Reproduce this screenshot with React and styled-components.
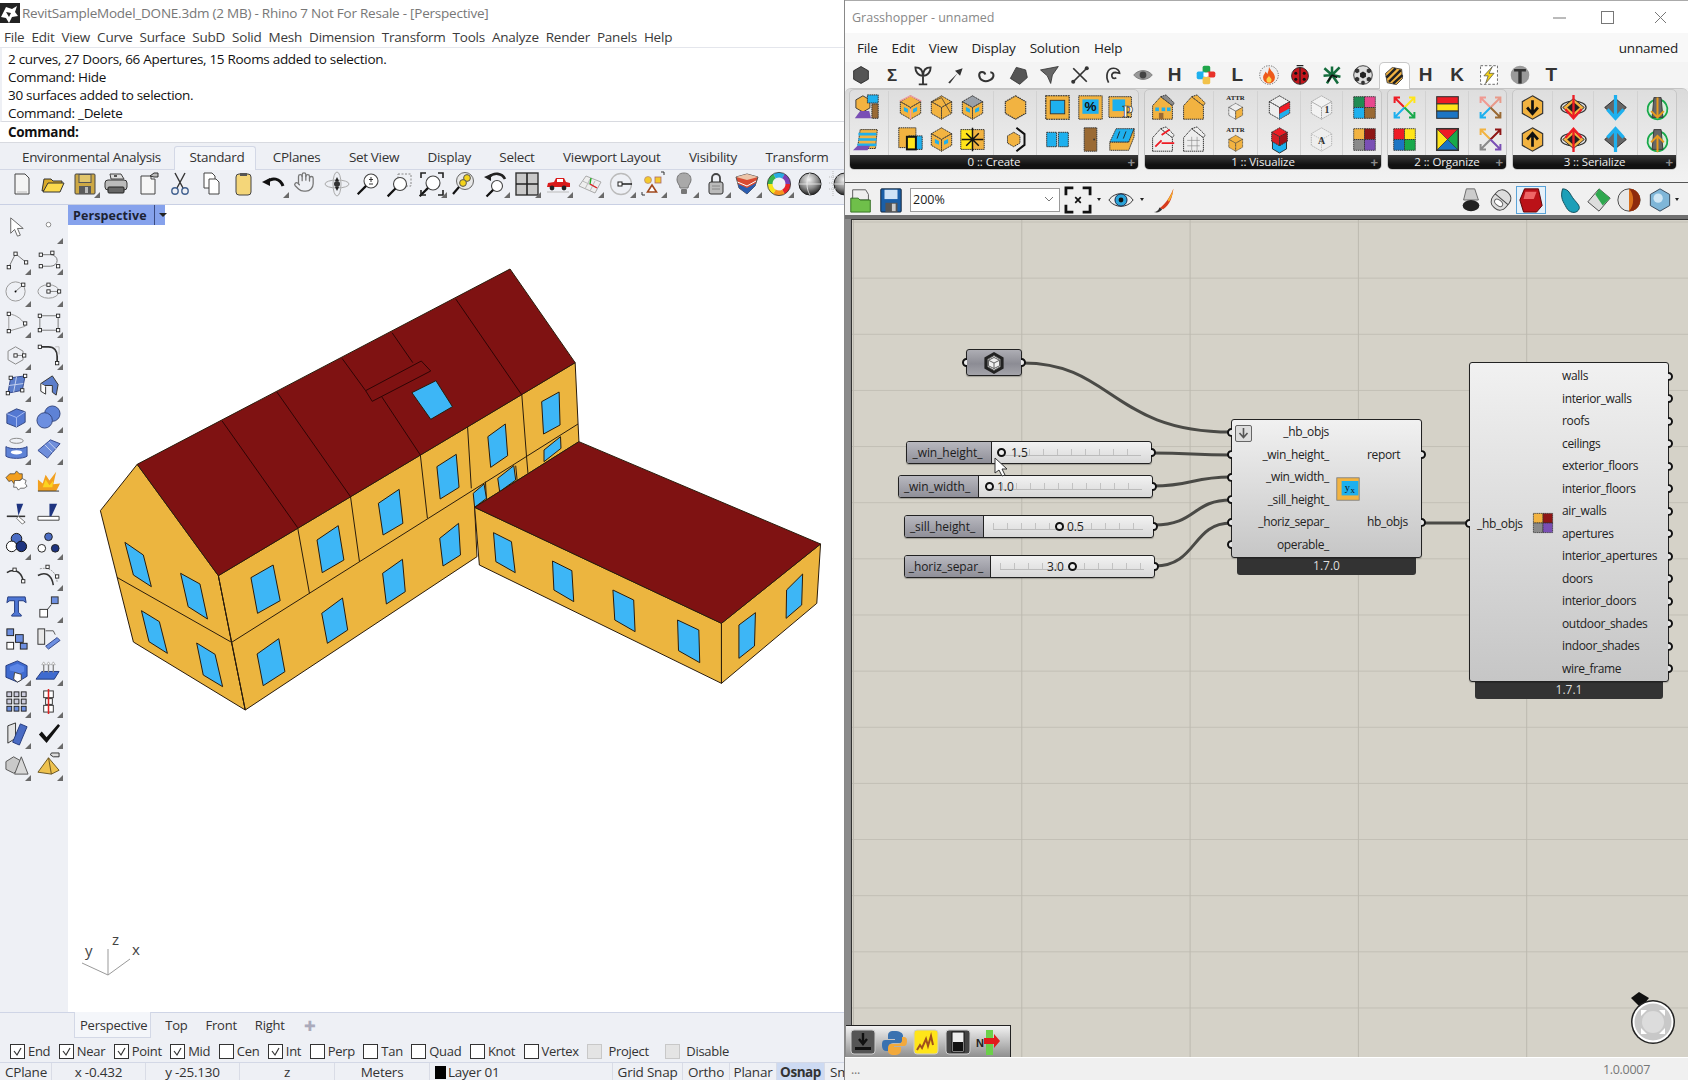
import React from 'react';
import styled, { createGlobalStyle } from 'styled-components';
import { Hand } from 'lucide-react';

const UI = '"Open Sans", "Noto Sans", sans-serif';
const O = '#f2b341', B = '#1eb0ee', M = '#8e1616', P = '#7a4fb5', G = '#8a8a8a', BR = '#9a6a34', RD = '#ee1c25', YL = '#ffe51a', GN = '#18a94b', BL = '#1b75c4';

const Global = createGlobalStyle`
  html, body { margin: 0; padding: 0; background: #fff; }
  body { font-family: ${UI}; font-size: 12px; color: #1c1c1c; }
`;

const Page = styled.div`display: flex; width: 1688px; height: 1080px; overflow: hidden;`;
const RhinoWindow = styled.div`display: flex; flex-direction: column; width: 845px; height: 1080px; background: #eef0f5; flex: none;`;
const RhinoTitle = styled.div`display: flex; align-items: center; height: 26px; background: #fff; color: #777; font-size: 13.5px; letter-spacing: -.23px; gap: 2px; flex: none;`;
const RhinoMenu = styled.div`display: flex; align-items: center; height: 21px; padding-left: 4px; gap: 7px; background: #fff; font-size: 13.5px; letter-spacing: -.23px; color: #3a3a3a; border-bottom: 1px solid #e4e6ec; flex: none;`;
const History = styled.div`height: 74px; background: #fff; padding: 2px 0 0 6px; border-left: 2px solid #eef0f5; flex: none; border-bottom: 1px solid #d8dae0; box-sizing: border-box;`;
const HistoryLine = styled.div`height: 18px; line-height: 18px; font-size: 13.5px; letter-spacing: -.3px; color: #111;`;
const CommandRow = styled.div`height: 20px; line-height: 20px; background: #fff; padding-left: 8px; font-size: 13.5px; font-weight: 700; letter-spacing: -.3px; color: #111; flex: none; border-bottom: 1px solid #d8dae0;`;
const TabRow = styled.div`display: flex; align-items: flex-end; height: 26px; padding-left: 22px; gap: 28.5px; border-bottom: 1px solid #d3d8e6; flex: none; font-size: 13.5px; letter-spacing: -.33px;`;
const RhinoTab = styled.div`height: 23px; line-height: 23px; color: #333; position: relative; white-space: nowrap;
  ${p => p.$on && `&::before { content: ''; position: absolute; left: -15px; right: -12px; top: 0; bottom: -1px; background: #f3f5f9; border: 1px solid #d3d8e6; border-bottom: 0; border-radius: 3px 3px 0 0; z-index: 0; }`}
  & > span { position: relative; }`;
const Toolbar = styled.div`display: flex; align-items: flex-start; height: 35px; padding: 0 0 6px 6px; flex: none; border-bottom: 1px solid #c9d0e4; overflow: hidden; box-sizing: border-box;`;
const ToolSlot = styled.div`position: relative; width: 31.55px; height: 28px; display: flex; align-items: center; justify-content: center; flex: none;
  ${p => p.$more && `&::after { content: ''; position: absolute; right: 1px; bottom: 0; border-left: 6px solid transparent; border-bottom: 6px solid #6a6a6a; }`}`;
const Work = styled.div`display: flex; flex: 1; min-height: 0;`;
const Sidebar = styled.div`width: 68px; flex: none; display: grid; grid-template-columns: 32px 32px; grid-auto-rows: 31.6px; align-content: start; padding-top: 7px; box-sizing: border-box;`;
const SideSlot = styled(ToolSlot)`width: 32px; height: 31.6px;`;
const Viewport = styled.div`position: relative; flex: 1; background: #fff;`;
const ViewName = styled.div`display: flex; align-items: center; height: 20px; width: 97px; background: #86a2ec; box-sizing: border-box; padding-left: 5px; font-weight: 700; font-size: 12.5px; color: #1c2233; letter-spacing: .1px;`;
const ViewArrow = styled.span`margin-left: 7px; height: 20px; border-left: 1px solid #3a4a80; padding-left: 4px; display: flex; align-items: center;
  &::after { content: ''; border-left: 4px solid transparent; border-right: 4px solid transparent; border-top: 4px solid #222; }`;
const BuildingSvg = styled.svg`position: absolute; left: 22px; top: 55px; width: 740px; height: 460px;`;
const AxisSvg = styled.svg`position: absolute; left: 5px; top: 726px; width: 80px; height: 50px; overflow: visible;`;
const ViewTabs = styled.div`display: flex; align-items: center; height: 28px; padding: 0 0 3px 80px; gap: 18px; font-size: 13px; letter-spacing: -.23px; color: #333; flex: none; border-top: 1px solid #cfd5e6; box-sizing: border-box;`;
const ViewTab = styled.div`position: relative; & > span { position: relative; }
  ${p => p.$on && `&::before { content: ''; position: absolute; left: -6px; right: -4px; top: -4px; bottom: -4px; background: #f4f6fa; border: 1px solid #d3d8e6; border-top: 0; }`}`;
const PlusTab = styled.span`color: #aab; font-size: 14px; margin-left: 1px;`;
const OsnapRow = styled.div`display: flex; align-items: center; height: 23px; padding-left: 10px; gap: 8.5px; font-size: 13px; letter-spacing: -.3px; color: #333; flex: none; box-sizing: border-box; border-bottom: 1px solid #d3d8e6;`;
const Snap = styled.label`display: flex; align-items: center; gap: 3px; margin-right: ${p => p.$mr || 0}px; color: #333;`;
const Check = styled.span`width: 13px; height: 13px; border: 1px solid ${p => p.$off ? '#c8c8c8' : '#333'}; background: ${p => p.$off ? '#e4e4e4' : '#fff'}; display: flex; align-items: center; justify-content: center; flex: none;`;
const StatusRow = styled.div`display: flex; height: 17px; font-size: 13.5px; line-height: 15px; letter-spacing: -.23px; color: #333; flex: none; overflow: hidden;`;
const Cell = styled.div`width: ${p => p.$w}px; height: 17px; padding-top: 2px; flex: none; display: flex; align-items: center; gap: 2px; justify-content: ${p => p.$left ? 'flex-start' : 'center'}; padding-left: ${p => p.$left ? 5 : 0}px; box-sizing: border-box; border-right: 1px solid #d9dce6; white-space: nowrap;
  ${p => p.$on && `background: #cddaf2; font-weight: 700; letter-spacing: -.45px;`}`;
const LayerSwatch = styled.span`width: 11px; height: 13px; background: #000; display: inline-block;`;

const GhWindow = styled.div`display: flex; flex-direction: column; flex: 1; height: 1080px; background: #f0f0f0; border-top: 1px solid #aaa; box-sizing: border-box; box-shadow: -1px 0 0 #888; position: relative; z-index: 2;`;
const GhTitle = styled.div`display: flex; align-items: center; justify-content: space-between; height: 32px; background: #fff; padding-left: 7px; color: #888; font-size: 12.5px; flex: none;`;
const WinButtons = styled.div`display: flex; margin-right: -1px;`;
const WinButton = styled.div`width: ${p => p.$w}px; height: 24px; display: flex; align-items: center; justify-content: center;`;
const GhMenu = styled.div`display: flex; align-items: center; justify-content: space-between; height: 29px; padding: 1px 10px 0 12px; background: #f8f8f8; font-size: 13.5px; letter-spacing: -.2px; color: #222; flex: none; box-sizing: border-box;`;
const GhMenuItems = styled.div`display: flex; gap: 14px;`;
const GhTabs = styled.div`display: flex; align-items: center; height: 26px; padding-left: 0px; flex: none; background: #f4f4f4;`;
const GhTab = styled.div`width: 31.4px; height: 26px; display: flex; align-items: center; justify-content: center; flex: none; font: 700 19px "Liberation Sans", sans-serif; color: #333; box-sizing: border-box;
  ${p => p.$on && `background: #fff; border: 1px solid #c8c8c8; border-bottom: 0; border-radius: 5px 5px 0 0; height: 27px; margin-bottom: -1px; position: relative; z-index: 1;`}`;
const Ribbon = styled.div`display: flex; gap: 5px; height: 95px; padding: 0 0 0 4px; flex: none; background: linear-gradient(#dadada, #efefef 82%, #f2f2f2); border-top: 1px solid #c4c4c4; box-sizing: border-box; border-radius: 6px 6px 0 0;`;
const Group = styled.div`width: ${p => p.$w}px; height: 81px; display: flex; flex-direction: column; flex: none; border-radius: 5px; border: 1px solid #c6c6c6; box-sizing: border-box; background: linear-gradient(#dedede, #f0f0f0); overflow: hidden;`;
const GroupIcons = styled.div`display: flex; height: 65px; padding-top: 1px; box-sizing: border-box; flex: none;`;
const GroupCol = styled.div`width: ${p => p.$w}px; flex: none; display: flex; flex-direction: column; align-items: center; justify-content: space-around; padding: 0 ${p => p.$pr || 0}px 0 ${p => p.$pl || 0}px; box-sizing: border-box; ${p => p.$sep ? 'border-left: 1px solid #d2d2d2;' : ''}`;
const GroupFoot = styled.div`position: relative; flex: 1; background: linear-gradient(#3a3a3a, #111 70%); color: #eee; font: 11.5px/13px ${UI}; text-align: center; letter-spacing: -.1px;`;
const GroupPlus = styled.span`position: absolute; right: 3px; top: 0; color: #8a8a8a; font: 700 13px/15px "Liberation Sans", sans-serif;`;
const GhBar = styled.div`display: flex; align-items: center; height: 33px; padding: 1px 0 0 1px; border-top: 1px solid #555; background: #f0f0f0; flex: none; box-sizing: border-box; margin-top: -1px;`;
const BarIcon = styled.div`width: ${p => p.$w || 30}px; height: 28px; display: flex; align-items: center; justify-content: center; flex: none; box-sizing: border-box; ${p => p.$sel && 'border: 1px solid #5aa3d8; background: #e6f1fa;'}`;
const ZoomBox = styled.div`width: 150px; height: 24px; margin: 0 4px 0 4px; border: 1px solid #999; background: #fff; display: flex; align-items: center; justify-content: space-between; padding: 0 6px 0 2px; box-sizing: border-box; font-size: 12.5px; flex: none;`;
const Caret = styled.span`width: 0; height: 0; margin: 0 ${p => p.$m ?? 0}px; border-left: 2.5px solid transparent; border-right: 2.5px solid transparent; border-top: 3px solid #222; flex: none;`;
const BarSpacer = styled.div`flex: 1;`;
const CanvasWrap = styled.div`display: flex; flex: 1; min-height: 0; flex-direction: column; border-top: 4px solid #6f6f6f; position: relative; background: #8b8b8b; padding-left: 6px;`;
const Canvas = styled.div`position: relative; flex: 1; border-left: 1px solid #333; border-top: 1px solid #333;
  background-color: #d5d2c8;
  background-image:
    linear-gradient(to right, #bcb9af 1px, transparent 1px),
    linear-gradient(to bottom, #c2bfb5 1px, transparent 1px);
  background-size: 168.3px 100%, 100% 56.15px;
  background-position: 1px 0, 0 1.5px;`;
const WireSvg = styled.svg`position: absolute; left: 0; top: 0; width: 837px; height: 836px; overflow: visible;`;
const ParamNode = styled.div`position: absolute; left: ${p => p.$x}px; top: ${p => p.$y}px; width: 56px; height: 27px; border: 1px solid #222; border-radius: 3px; box-sizing: border-box; background: linear-gradient(#aeaeb4, #8c8c94 55%, #a4a4aa); display: flex; align-items: center; justify-content: center; box-shadow: 0 1px 1px rgba(0,0,0,.25);`;
const SliderNode = styled.div`position: absolute; left: ${p => p.$x}px; top: ${p => p.$y}px; width: ${p => p.$w}px; height: 23px; display: flex; border: 1px solid #222; border-radius: 3px; box-sizing: border-box; background: linear-gradient(#f2f2f2, #d8d8d8); box-shadow: 0 1px 1px rgba(0,0,0,.25);`;
const SliderLabel = styled.div`width: ${p => p.$w}px; flex: none; padding-right: 3px; box-sizing: border-box; background: linear-gradient(#b8b8bf, #8f8f98); border-right: 1px solid #222; display: flex; align-items: center; justify-content: center; font-size: 12px; color: #1c1c1c; border-radius: 2px 0 0 2px; letter-spacing: -.05px;`;
const SliderTrack = styled.div`position: relative; flex: 1;`;
const Ticks = styled.div`position: absolute; left: 9px; right: 10px; top: 7px; height: 6px; border-bottom: 1px solid #bbb; background-image: repeating-linear-gradient(to right, #c2c2c2 0 1px, transparent 1px 14px);`;
const Knob = styled.div`position: absolute; left: ${p => p.$x}px; top: 6px; width: 5px; height: 5px; border: 2px solid #111; border-radius: 50%; background: #eee; box-sizing: content-box;`;
const SliderValue = styled.div`position: absolute; left: ${p => p.$x}px; top: 0; line-height: 21px; font-size: 12px; color: #222;`;
const Port = styled.span`position: absolute; top: 50%; ${p => p.$side}: -5px; width: 9px; height: 9px; margin-top: -4.5px; border-radius: 50%; border: 2px solid #111; background: #ececec; box-sizing: border-box; z-index: 2; clip-path: ${p => p.$side === 'left' ? 'inset(0 45% 0 0)' : 'inset(0 0 0 45%)'};`;
const CompNode = styled.div`position: absolute; left: ${p => p.$x}px; top: ${p => p.$y}px; width: ${p => p.$w}px; display: flex; flex-direction: column;`;
const CompBody = styled.div`position: relative; display: flex; height: ${p => p.$h}px; box-sizing: border-box; border: 1px solid #222; border-radius: 3px; background: linear-gradient(#f1f1f1, #c6c6c6); padding-top: ${p => p.$pt || 0}px; box-shadow: 0 1px 1px rgba(0,0,0,.2);`;
const CompFoot = styled.div`height: 17px; margin: 0 6px; background: #333; color: #ddd; border-radius: 0 0 3px 3px; text-align: center; font-size: 12px; line-height: 16px;`;
const PortRows = styled.div`width: ${p => p.$w}px; flex: none; display: flex; flex-direction: column;`;
const PortRow = styled.div`height: 22.5px; line-height: 22px; font-size: 12px; color: #222; white-space: nowrap; text-align: ${p => p.$right ? 'right' : 'left'}; letter-spacing: -.35px;`;
const CompIcon = styled.div`width: ${p => p.$w}px; flex: none; display: flex; align-items: center; justify-content: center;`;
const InPorts = styled.div`position: absolute; left: 0; top: ${p => p.$t}px; display: flex; flex-direction: column;`;
const PortAnchor = styled.div`position: relative; height: 22.5px; width: 1px;`;
const OutPorts = styled.div`position: absolute; right: 0; top: ${p => p.$t}px; display: flex; flex-direction: column;`;
const Collapse = styled.div`position: absolute; left: 3px; top: 5px; width: 15px; height: 15px; border: 1px solid #666; border-radius: 2px; background: #ddd; display: flex; align-items: center; justify-content: center;`;
const SideLabel = styled.div`width: 92px; flex: none; display: flex; align-items: center; gap: 8px; padding-left: 7px; box-sizing: border-box; font-size: 12px; letter-spacing: -.35px; color: #222;`;
const CursorSvg = styled.svg`position: absolute; left: 142px; top: 237px; width: 16px; height: 20px; z-index: 3;`;
const Widgets = styled.div`position: absolute; left: -6px; bottom: 0; width: 165px; height: 32px; display: flex; align-items: center; padding-left: 1px; background: linear-gradient(#f2f2f2, #8f8f8f); border: 1px solid #222; border-left: 0; border-bottom: 0; box-sizing: border-box;`;
const WidgetSlot = styled.div`width: 31.6px; height: 28px; display: flex; align-items: center; justify-content: center;`;
const Compass = styled.svg`position: absolute; right: 13px; bottom: 11px; width: 48px; height: 62px;`;
const GhStatus = styled.div`display: flex; align-items: center; justify-content: space-between; height: 22px; padding: 0 38px 0 6px; background: #f0f0f0; border-top: 1px solid #fff; flex: none; color: #777; font-size: 12.5px; letter-spacing: -.3px;`;
const Svg = styled.svg`display: block; flex: none; overflow: visible;`;

const rad = a => a * Math.PI / 180;
const hex = (cx, cy, r) => [0, 60, 120, 180, 240, 300].map(a => `${(cx + r * Math.sin(rad(a))).toFixed(1)},${(cy - r * Math.cos(rad(a))).toFixed(1)}`).join(' ');
const Ic = ({ s = 26, v = 26, children }) => <Svg width={s} height={s} viewBox={`0 0 ${v} ${v}`}>{children}</Svg>;

const Mag = ({ x = 15, y = 10, r = 6, c = '#fff' }) => <g><circle cx={x} cy={y} r={r} fill={c} stroke="#444" strokeWidth="1.1" /><line x1={x - r * .7} y1={y + r * .7} x2={x - r * 1.9} y2={y + r * 1.9} stroke="#111" strokeWidth="2.2" /></g>;
const Pt = ({ x, y }) => <rect x={x - 1.7} y={y - 1.7} width="3.4" height="3.4" fill="#fff" stroke="#222" strokeWidth=".9" />;

const rhinoTools = [
  [<><path d="M6 3h10l4 4v16H6z" fill="#f4f4f4" stroke="#444" /><path d="M8 21h10" stroke="#bbb" /></>],
  [<><path d="M2 20 4 8h7l2 2h9v3z" fill="#d9a928" stroke="#333" /><path d="M3 21 8 12h16l-4 9z" fill="#fbd94d" stroke="#333" /></>],
  [<><rect x="3" y="3" width="20" height="20" rx="1" fill="#cda845" stroke="#444" /><rect x="7" y="3.5" width="12" height="8" fill="#e2c66c" stroke="#555" /><rect x="7" y="15" width="12" height="8" fill="#5a5a5a" /><rect x="13" y="16" width="3" height="6" fill="#bbb" /></>, 1],
  [<><path d="M7 3h11l3 5H8z" fill="#ddd" stroke="#444" /><rect x="2" y="9" width="22" height="10" rx="3" fill="#bbb" stroke="#333" /><rect x="5" y="16" width="16" height="6" rx="1" fill="#666" stroke="#222" /><path d="M11 5h3" stroke="#555" strokeWidth="2" /></>],
  [<><path d="M6 5h10v3l4 0v15H6z" fill="#f6f6f6" stroke="#444" /><path d="M15 5l4-3h4v4h-4z" fill="#bbb" stroke="#333" /></>],
  [<><path d="M8 2l8 15M18 2 10 17" stroke="#333" strokeWidth="1.4" /><circle cx="8" cy="20" r="3.2" fill="none" stroke="#41608f" strokeWidth="1.4" /><circle cx="18" cy="20" r="3.2" fill="none" stroke="#41608f" strokeWidth="1.4" /></>],
  [<><path d="M6 2h8l3 3v12H6z" fill="#fff" stroke="#444" /><path d="M11 8h7l3 3v12H11z" fill="#fff" stroke="#444" /></>],
  [<><rect x="6" y="3" width="15" height="21" rx="3" fill="#f4d679" stroke="#444" /><rect x="10" y="2" width="7" height="3" fill="#555" /></>],
  [<><path d="M22 15C19 7 11 6 6 11" fill="none" stroke="#111" strokeWidth="3" /><path d="M1 11l8-4 0 8z" fill="#111" /></>, 1],
  [<Hand size={22} color="#777" strokeWidth={1.4} />],
  [<><circle cx="13" cy="13" r="3" fill="#333" /><ellipse cx="13" cy="13" rx="12" ry="4" fill="none" stroke="#aaa" /><ellipse cx="13" cy="13" rx="4" ry="12" fill="none" stroke="#aaa" /><path d="M13 6l-2 4h4zM13 20l-2-4h4z" fill="#222" /></>],
  [<><Mag x={15} y={10} r={7} /><path d="M15 6v5M13 8.5h4M13 13h4" stroke="#333" strokeWidth="1" /></>],
  [<><rect x="11" y="3" width="13" height="12" fill="none" stroke="#888" strokeDasharray="2 1.5" /><Mag x={13} y={13} r={6.5} /></>],
  [<><Mag x={14} y={12} r={7} /><path d="M2 7V2h5M19 2h5v5M2 19v5h5M24 19v5h-5" fill="none" stroke="#222" strokeWidth="1.6" /></>, 1],
  [<><circle cx="15" cy="10" r="8.5" fill="#e8e8e8" stroke="#666" /><circle cx="17" cy="7" r="3.4" fill="#f4d319" stroke="#555" /><circle cx="13" cy="12" r="3.4" fill="#f4d319" stroke="#555" /><line x1="9" y1="16" x2="3" y2="23" stroke="#111" strokeWidth="2.2" /></>],
  [<><Mag x={15} y={15} r={5.5} /><path d="M23 8C20 2 12 1 7 6" fill="none" stroke="#222" strokeWidth="2.6" /><path d="M2 6l7-3 0 7z" fill="#222" /></>, 1],
  [<><rect x="2" y="2" width="22" height="22" fill="#c9c9c9" stroke="#333" strokeWidth="1.4" /><path d="M13 2v22M2 13h22" stroke="#222" strokeWidth="1.6" /></>, 1],
  [<><path d="M2 16l1-4 6-1 2-4h8l2 4 4 1v4z" fill="#d81b1b" /><circle cx="7" cy="17" r="2.4" fill="#222" /><circle cx="19" cy="17" r="2.4" fill="#222" /><path d="M2 21h22" stroke="#bbb" /><rect x="12" y="8" width="6" height="3" fill="#fff" /></>, 1],
  [<><path d="M9 5l15 6-6 11L2 15z" fill="#eee" stroke="#aaa" /><path d="M5.5 10l15 7M13 8 8 18M18 10l-5 10" stroke="#bbb" /><path d="M13 13l7 4" stroke="#d22" strokeWidth="1.4" /><path d="M13 13l1-6" stroke="#2a2" strokeWidth="1.4" /></>, 1],
  [<><circle cx="13" cy="13" r="10.5" fill="none" stroke="#bbb" strokeWidth="1.3" /><rect x="10" y="11" width="4" height="4" fill="#fff" stroke="#222" /><line x1="14" y1="13" x2="24" y2="13" stroke="#111" strokeWidth="1.4" /></>, 1],
  [<><circle cx="8" cy="9" r="3.5" fill="#f3c92d" stroke="#a77" strokeWidth=".6" /><rect x="15" y="6" width="6" height="6" fill="#f3c92d" stroke="#a66" strokeWidth=".8" /><path d="M12 14l4.5 7h-9z" fill="#fff" stroke="#a0481c" strokeWidth="1.6" /><path d="M21 1h3v3M2 21v3h3" fill="none" stroke="#333" /></>, 1],
  [<><path d="M13 2c-5 0-7 3-7 7 0 3 3 5 3 8h8c0-3 3-5 3-8 0-4-2-7-7-7z" fill="#a9a9a9" stroke="#777" /><rect x="10" y="18" width="6" height="5" rx="1" fill="#777" /></>, 1],
  [<><path d="M9 11V7a4 4 0 0 1 8 0v4" fill="none" stroke="#444" strokeWidth="1.8" /><rect x="6" y="11" width="14" height="12" rx="2" fill="#bbb" stroke="#333" /><path d="M9 15h8M9 18h8" stroke="#888" /></>, 1],
  [<><path d="M2 6l11-3 11 3-3 9-8 8-8-6z" fill="#d94b32" stroke="#555" /><path d="M2 6l11 3 11-3-11-3z" fill="#ecc4a8" /><path d="M4 13l9 4 9-5-1 3-8 8-8-6z" fill="#2a5db0" /><path d="M3.5 11l9.5 4 9-5" stroke="#fff" fill="none" /></>, 1],
  [<><circle cx="13" cy="13" r="9" fill="none" stroke="#ddd" strokeWidth="5" />
    {['#e8232a', '#f7941e', '#f7e51a', '#39b54a', '#29abe2', '#7a3fb5'].map((c, i) => <circle key={c} cx="13" cy="13" r="9" fill="none" stroke={c} strokeWidth="5" strokeDasharray="9.43 47.1" transform={`rotate(${i * 60} 13 13)`} />)}
    <circle cx="13" cy="13" r="11.6" fill="none" stroke="#333" strokeWidth=".8" /></>, 1],
  [<><circle cx="13" cy="13" r="11" fill="url(#sph)" stroke="#222" /><path d="M2 13h22M13 2c-4 6-4 16 0 22" fill="none" stroke="#eee" strokeWidth=".8" /></>],
  [<><circle cx="16" cy="13" r="11" fill="url(#sph)" stroke="#222" /><path d="M5 13h22" stroke="#eee" strokeWidth=".8" /><path d="M0 6h10M0 12h6M0 18h8M4 0v26" stroke="#bbb" strokeDasharray="1 1" /></>],
];

const pc = '#5c7ecb';
const sideTools = [
  [<path d="M7 3v16l4-4 3 7 3-1-3-7h6z" fill="#fff" stroke="#666" />],
  [<circle cx="13" cy="10" r="2.4" fill="#fff" stroke="#888" />, 1],
  [<><path d="M5 21 12 7l11 9" fill="none" stroke="#777" /><Pt x={5} y={21} /><Pt x={12} y={7} /><Pt x={23} y={16} /></>, 1],
  [<><path d="M5 8h10a7 6 0 0 1 0 12H5" fill="none" stroke="#777" /><Pt x={5} y={8} /><Pt x={17} y={6} /><Pt x={5} y={20} /><Pt x={23} y={20} /></>, 1],
  [<><circle cx="12" cy="14" r="10" fill="none" stroke="#999" /><line x1="12" y1="14" x2="20" y2="7" stroke="#888" /><circle cx="12" cy="14" r="1" /><Pt x={20} y={7} /></>, 1],
  [<><ellipse cx="13" cy="14" rx="11" ry="7" fill="none" stroke="#999" /><line x1="13" y1="14" x2="24" y2="14" stroke="#888" /><Pt x={13} y={14} /><Pt x={24} y={14} /><Pt x={13} y={7} /></>, 1],
  [<><path d="M5 4c8 1 15 6 17 13L5 22z" fill="none" stroke="#999" /><Pt x={5} y={4} /><Pt x={22} y={14} /><Pt x={5} y={22} /></>, 1],
  [<><rect x="4" y="6" width="19" height="15" fill="none" stroke="#777" /><Pt x={4} y={6} /><Pt x={23} y={6} /><Pt x={4} y={21} /><Pt x={23} y={21} /></>, 1],
  [<><polygon points={hex(12, 14, 9)} fill="none" stroke="#888" /><line x1="12" y1="14" x2="21" y2="14" stroke="#888" /><Pt x={12} y={14} /><Pt x={21} y={14} /></>, 1],
  [<><path d="M4 5h9c6 0 9 4 9 10v8" fill="none" stroke="#333" strokeWidth="1.8" /><path d="M20 5h4v8" fill="none" stroke="#bbb" /><Pt x={4} y={5} /><Pt x={22} y={22} /></>, 1],
  [<><path d="M7 5 22 3 19 18 4 21z" fill={pc} stroke="#34488a" /><path d="M13 4l-3 16M5 13l15-2" stroke="#c6d2ef" /><Pt x={7} y={5} /><Pt x={22} y={3} /><Pt x={19} y={18} /><Pt x={4} y={21} /></>, 1],
  [<><path d="M5 11 17 3l6 9-2 11-4-3 0-7-8 0z" fill={pc} stroke="#333" /><path d="M5 11v8l5 3v-8" fill="#fff" stroke="#333" /></>, 1],
  [<><path d="M3 9l10-5 9 3v11l-9 5-10-4z" fill="#5478d2" stroke="#33467e" /><path d="M3 9l10 4 9-6" fill="none" stroke="#a8bbf0" /><path d="M13 13v10" stroke="#a8bbf0" /></>, 1],
  [<><circle cx="17" cy="9" r="8" fill="#5e82d6" stroke="#33467e" /><circle cx="9" cy="16" r="8" fill="#6d8fe0" stroke="#33467e" /></>, 1],
  [<><ellipse cx="13" cy="5" rx="7" ry="2.6" fill="none" stroke="#888" /><path d="M2 11c4 3 18 3 22 0v10c-4 3-18 3-22 0z" fill="#5e82d6" stroke="#34488a" /><ellipse cx="13" cy="17" rx="6" ry="2.2" fill="#fff" /></>, 1],
  [<><path d="M2 15 15 4l10 4-13 15z" fill="#6f8edb" stroke="#34488a" /><path d="M9 9l8 8M13 6l8 8" stroke="#c6d2ef" /></>, 1],
  [<><path d="M6 6h5l2-3 3 3h3v5l-3 2-3 3h-3l-2-3-3 1-3-4z" fill="#f29f1f" stroke="#333" strokeWidth=".7" /><path d="M11 13h6l2-2 4 2-1 3 2 3-3 2-4 0-2 2-2-3-3 0z" fill="#fff" stroke="#333" strokeWidth=".7" /></>],
  [<><path d="M2 24V12l5 4 3-9 4 6 7-9-3 13 7-1-4 8z" fill="#f2a01f" /><path d="M2 24h22" stroke="#333" /><path d="M7 20 10 12l4 6 4-5-1 7z" fill="#fcd41f" /></>],
  [<><path d="M3 17h19" stroke="#333" strokeWidth="1.6" /><path d="M3 17h10" stroke="#333" /><path d="M13 4h7l-5 12z" fill="#1e3480" /><path d="M15 17l7 6-3 2-6-6z" fill="#fff" stroke="#777" /></>],
  [<><path d="M2 17h22v4H2z" fill="#fff" stroke="#444" /><path d="M14 4h8l-6 13h-2z" fill="#1e3480" /></>],
  [<><circle cx="13" cy="8" r="5.5" fill="#4a6cc4" stroke="#111" /><circle cx="8" cy="16" r="5.5" fill="#fff" stroke="#111" /><circle cx="18" cy="16" r="5.5" fill="#1e3480" stroke="#111" /></>, 1],
  [<><circle cx="13" cy="6" r="4" fill="#4a6cc4" stroke="#222" /><circle cx="6" cy="18" r="4" fill="#fff" stroke="#222" /><circle cx="20" cy="18" r="4" fill="#1e3480" stroke="#222" /></>, 1],
  [<><path d="M3 10c6-4 14-3 17 8" fill="none" stroke="#333" strokeWidth="1.6" /><Pt x={11} y={7} /><Pt x={20} y={19} /></>],
  [<><path d="M2 13c7-4 14-2 16 10" fill="none" stroke="#333" strokeWidth="1.6" /><path d="M4 6c9-2 17 2 18 14" fill="none" stroke="#999" strokeDasharray="2 1" /><Pt x={12} y={4} /><Pt x={22} y={14} /></>, 1],
  [<path d="M4 3h18l1 6-3-2h-5v12l3 3v1H8v-1l3-3V7H6L3 9z" fill="#4e76d4" stroke="#233a7e" />],
  [<><rect x="4" y="16" width="8" height="8" fill="#fff" stroke="#333" /><rect x="16" y="3" width="7" height="7" fill="#6d8fe0" stroke="#333" /><path d="M12 16l4-5" stroke="#333" /></>, 1],
  [<><rect x="3" y="3" width="7" height="7" fill="#6d8fe0" stroke="#222" /><rect x="12" y="9" width="8" height="8" fill="#6d8fe0" stroke="#222" /><rect x="3" y="17" width="7" height="7" fill="#fff" stroke="#222" /><rect x="17" y="18" width="7" height="6" fill="#6d8fe0" stroke="#222" /></>],
  [<><rect x="2" y="3" width="7" height="16" fill="#e8e8e8" stroke="#333" /><path d="M10 21 22 12l3 3-12 9z" fill="#6d8fe0" stroke="#34488a" /><path d="M10 5h8l2 4" fill="none" stroke="#555" /></>],
  [<><path d="M2 8l12-5 10 5v11l-10 6-12-5z" fill="#3f6bd0" stroke="#233a7e" /><path d="M6 9l8-3 7 3v5l-5 2-5-2-5-1z" fill="#5c86e6" /><path d="M11 15l7 2v6l-4 2-4-3z" fill="#fff" stroke="#444" /></>, 1],
  [<><path d="M0 22 6 14h18l-5 8z" fill="#3f6bd0" stroke="#233a7e" /><path d="M8 15V6M13 15V6M18 15V6" stroke="#888" strokeWidth="1.4" /><path d="M6 7l2-3 2 3zM11 7l2-3 2 3zM16 7l2-3 2 3z" fill="#fff" stroke="#777" strokeWidth=".5" /></>, 1],
  [<>{[0, 1, 2].map(r => [0, 1, 2].map(c => <rect key={`${r}${c}`} x={3 + c * 7.5} y={3 + r * 7.5} width="5" height="5" fill={r === 2 ? '#6d8fe0' : '#ccd'} stroke="#222" />))}</>, 1],
  [<><rect x="8" y="2" width="10" height="7" fill="#fff" stroke="#333" /><rect x="10" y="10" width="7" height="6" fill="#fff" stroke="#333" /><rect x="8" y="17" width="10" height="7" fill="#fff" stroke="#333" /><line x1="13" y1="0" x2="13" y2="26" stroke="#d22" strokeWidth="1.6" /></>, 1],
  [<><path d="M4 5l8-3v16l-8 5z" fill="#e4e4e4" stroke="#333" /><path d="M9 22 17 3l7 3-8 19z" fill="#4a6cc4" stroke="#233a7e" /></>, 1],
  [<path d="M3 14l3-3 5 6L23 3l2 2-14 18z" fill="#111" />, 1],
  [<><path d="M2 10l8-5 7 4v9l-7 4-8-4z" fill="#c9c9c9" stroke="#555" /><path d="M18 5l7 18H11z" fill="#d8d8d8" stroke="#555" /></>, 1],
  [<><path d="M2 21 13 6l11 13-8 4z" fill="#eec24f" stroke="#6a5520" /><path d="M13 6l3 17" stroke="#6a5520" /><path d="M16 1h8v4h-6l-3-2z" fill="#ddd" stroke="#333" /></>, 1],
];

const gh = {
  hexD: <polygon points={hex(13, 13, 10)} fill="#555" stroke="#222" />,
  sigma: <text x="13" y="20" textAnchor="middle" fontFamily="Liberation Sans" fontWeight="700" fontSize="20" fill="#333">Σ</text>,
  plant: <path d="M13 24V14M13 14C7 14 4 9 4 4c6 0 9 3 9 10zM13 14c6 0 9-5 9-10-6 0-9 3-9 10zM8 24h10" fill="none" stroke="#333" strokeWidth="2.2" />,
  arrow: <path d="M5 22 16 11l-3-3 9-3-3 9-3-3L7 23z" fill="#333" />,
  spiral: <path d="M16 8c3-3 8 2 4 8s-11 6-14 1c-2-4 3-7 6-4" transform="rotate(30 13 13)" fill="none" stroke="#333" strokeWidth="2.4" />,
  blob: <path d="M11 4l11 3 2 9-9 8-11-7z" fill="#555" stroke="#333" />,
  funnel: <path d="M3 7 24 3 17 13l-2 10-4-9z" fill="#666" stroke="#333" />,
  cross: <><path d="M5 21 21 5M5 5l16 16" stroke="#333" strokeWidth="2" /><circle cx="5" cy="21" r="2.4" fill="#333" /><circle cx="21" cy="5" r="2.4" fill="#333" /></>,
  hook: <path d="M9 22C5 14 7 5 15 5c4 0 7 3 7 6l-5-1c-3 0-5 2-4 5s4 2 5 1" fill="none" stroke="#333" strokeWidth="2" />,
  eye: <><path d="M2 13c6-7 16-7 22 0-6 7-16 7-22 0z" fill="#999" stroke="#777" /><circle cx="13" cy="13" r="4" fill="#444" /></>,
  plug: <><rect x="9" y="2" width="9" height="9" rx="2" fill="#1fa64a" /><rect x="2" y="9" width="10" height="9" rx="2" fill="#1eb0ee" /><rect x="14" y="9" width="10" height="7" rx="2" fill="#e8322a" /><rect x="9" y="15" width="9" height="9" rx="2" fill="#f2c24a" /><rect x="10" y="10" width="6" height="5" fill="#fff" /></>,
  fire: <><circle cx="13" cy="13" r="11" fill="#eee" stroke="#555" strokeDasharray="1.5 1.5" /><path d="M13 3c1 5 7 7 7 13a7 7 0 0 1-14 0c0-3 2-4 3-7 1 2 2 2 2 3 1-3 2-5 2-9z" fill="#ee5a1a" /><path d="M13 13c0 3 3 3 3 6a3 3 0 0 1-6 0c0-3 3-3 3-6z" fill="#fcd34b" /></>,
  bug: <><circle cx="13" cy="14" r="10" fill="#c3161c" stroke="#222" /><path d="M13 4v20M9 2h8" stroke="#222" strokeWidth="1.5" /><circle cx="8" cy="11" r="1.8" fill="#111" /><circle cx="18" cy="11" r="1.8" fill="#111" /><circle cx="8" cy="18" r="1.8" fill="#111" /><circle cx="18" cy="18" r="1.8" fill="#111" /></>,
  bush: <><path d="M13 13 4 5M13 13l9-9M13 13 3 14M13 13l10 2M13 13 7 23M13 13l7 10M13 13V3" stroke="#146c3c" strokeWidth="3" /><path d="M13 13 8 21M13 13l6 3" stroke="#111" strokeWidth="2" /></>,
  ball: <><circle cx="13" cy="13" r="11" fill="#ddd" stroke="#222" /><polygon points={hex(13, 13, 4)} fill="#222" /><polygon points={hex(6, 8, 3)} fill="#333" /><polygon points={hex(20, 8, 3)} fill="#333" /><polygon points={hex(6, 18, 3)} fill="#333" /><polygon points={hex(20, 18, 3)} fill="#333" /><polygon points={hex(13, 22, 2.4)} fill="#333" /></>,
  bee: <><path d="M5 21 3 10l8-7 11 2 1 11-7 7z" fill="#f2b341" stroke="#333" /><path d="M4 15 15 4M7 20 21 6M12 22l11-10" stroke="#222" strokeWidth="3" /></>,
  bolt: <><rect x="3" y="2" width="20" height="22" fill="#fff" stroke="#555" strokeDasharray="3 2" /><path d="M17 3 7 14h5l-3 9 10-12h-6z" fill="#f4d319" stroke="#444" strokeWidth=".8" /></>,
  tball: <><circle cx="13" cy="13" r="11" fill="#9a9a9a" /><path d="M6 6h14v3h-5v14h-4V9H6z" fill="#333" /></>,
};
const ghTabs = ['hexD', 'sigma', 'plant', 'arrow', 'spiral', 'blob', 'funnel', 'cross', 'hook', 'eye', 'H', 'plug', 'L', 'fire', 'bug', 'bush', 'ball', 'bee', 'H', 'K', 'bolt', 'tball', 'T'];

const D = { stroke: '#333', strokeWidth: 1.1, strokeDasharray: '1.6 .7' };
const Cube = ({ cx = 15, cy = 15, r = 13, top = O, l = O, rt = O, win, d = D }) => {
  const h = r * .5, w = r * .87;
  return <g>
    <polygon points={`${cx},${cy - r} ${cx + w},${cy - h} ${cx},${cy} ${cx - w},${cy - h}`} fill={top} {...d} />
    <polygon points={`${cx - w},${cy - h} ${cx},${cy} ${cx},${cy + r} ${cx - w},${cy + h}`} fill={l} {...d} />
    <polygon points={`${cx + w},${cy - h} ${cx},${cy} ${cx},${cy + r} ${cx + w},${cy + h}`} fill={rt} {...d} />
    {win && <><polygon points={`${cx - w * .65},${cy - h * .1} ${cx - w * .25},${cy + h * .25} ${cx - w * .25},${cy + h * .9} ${cx - w * .65},${cy + h * .6}`} fill={B} />
      <polygon points={`${cx + w * .65},${cy - h * .1} ${cx + w * .25},${cy + h * .25} ${cx + w * .25},${cy + h * .9} ${cx + w * .65},${cy + h * .6}`} fill={B} /></>}
  </g>;
};
const ArrowX = ({ c }) => <g fill="none" strokeWidth="2.2">
  <path d="M15 15 5 5M4 10V4h6" stroke={c[0]} /><path d="M15 15 25 5M20 4h6v6" stroke={c[1]} />
  <path d="M15 15 5 25M4 20v6h6" stroke={c[2]} /><path d="M15 15l10 10M26 20v6h-6" stroke={c[3]} /></g>;
const House = ({ f = O, r = G, win, wire }) => <g>
  <path d="M4 28V13L13 3l13 10v15z" fill={wire ? '#eee' : f} {...D} />
  <path d="M13 3l6-2 9 9-2 3z" fill={wire ? '#eee' : r} {...D} />
  {win && <><rect x="7" y="15" width="4" height="4" fill={B} /><rect x="14" y="15" width="4" height="4" fill={B} /><rect x="20" y="15" width="4" height="4" fill={B} /><rect x="11" y="21" width="5" height="7" fill={BR} /></>}
</g>;
const Attr = ({ children }) => <><text x="15" y="7" textAnchor="middle" fontFamily="Liberation Serif" fontWeight="700" fontSize="7.5" fill="#222">ATTR</text><g transform="translate(5 9) scale(.68)">{children}</g></>;
const Diamond = ({ c, up, sat }) => <g>
  {sat && <ellipse cx="15" cy="15" rx="14" ry="7" fill="none" stroke="#333" strokeWidth="1.4" />}
  <polygon points="15,5 27,15 15,25 3,15" fill={sat ? O : '#666'} stroke="#222" />
  {sat && <polygon points="15,9 22,15 15,21 8,15" fill="#222" />}
  <path d={up ? 'M15 29V3M6 13l9-10 9 10' : 'M15 1v26M6 17l9 10 9-10'} fill="none" stroke={c} strokeWidth={sat ? 2.6 : 3.6} />
</g>;
const HbArrow = ({ up }) => <g>
  <polygon points={hex(15, 15, 13)} fill={O} stroke="#333" strokeWidth="1.3" />
  <path d={up ? 'M15 23V9M9 15l6-7 6 7' : 'M15 7v14M9 15l6 7 6-7'} fill="none" stroke="#111" strokeWidth="3" />
</g>;
const Cyl = ({ up }) => <g>
  <ellipse cx="15" cy="17" rx="11" ry="11" fill="#d8ecd8" stroke={GN} strokeWidth="2" transform="rotate(-30 15 17)" />
  <path d="M11 4h8l2 22H9z" fill="#666" stroke="#333" />
  <path d={up ? 'M15 29V11M8 18l7-7 7 7' : 'M15 4v22M8 19l7 7 7-7'} fill="none" stroke="#e89a1c" strokeWidth="2.2" />
</g>;
const Four = ({ c }) => <g stroke="#333" strokeWidth="1" strokeDasharray="1.6 .7">
  <rect x="3" y="3" width="12" height="12" fill={c[0]} /><rect x="15" y="3" width="12" height="12" fill={c[1]} />
  <rect x="3" y="15" width="12" height="12" fill={c[2]} /><rect x="15" y="15" width="12" height="12" fill={c[3]} /></g>;

const rib = {
  a1: <><polygon points={hex(11, 11, 9)} fill={O} stroke="#333" /><rect x="16" y="1" width="12" height="9" fill={B} {...D} /><rect x="21" y="11" width="7" height="16" fill={BR} {...D} /><path d="M2 27l6-8h10l2 8z" fill={P} /></>,
  a2: <><path d="M5 25 25 25 27 4 8 4z" fill={O} {...D} /><path d="M6 9h20M6 15h20M5 21h21" stroke={B} strokeWidth="3" /><path d="M0 27l5-5h14l-3 5z" fill={P} /></>,
  b1: <><Cube win top={O} /><path d="M15 16v12M3 8l12-6 12 6" fill="none" stroke="#f0a0a0" strokeWidth="1.5" /></>,
  b2: <><rect x="2" y="2" width="19" height="22" fill={O} {...D} /><rect x="13" y="11" width="15" height="15" fill={B} {...D} /><rect x="11" y="12" width="10" height="14" fill={YL} stroke="#111" strokeWidth="2.2" /></>,
  c1: <><Cube top={O} /><path d="M4 9 15 4l10 17" fill="none" stroke="#333" strokeWidth=".8" /></>,
  c2: <Cube win top={O} />,
  d1: <Cube win top="#9aa0a8" />,
  d2: <><rect x="2" y="4" width="13" height="22" fill={YL} {...D} /><rect x="15" y="4" width="13" height="22" fill={O} {...D} /><path d="M3 15h24M8 8l14 14M22 8 8 22M15 2v26" stroke="#111" strokeWidth="1.6" /></>,
  e1: <polygon points={hex(15, 15, 13)} fill={O} stroke="#333" strokeWidth="1.3" strokeDasharray="1.8 .7" />,
  e2: <><polygon points={hex(13, 15, 8)} fill={O} {...D} /><path d="M16 2l9 7v12l-9 7" fill="none" stroke="#111" strokeWidth="2.2" /></>,
  f1: <><rect x="2" y="2" width="26" height="26" fill={O} stroke="#222" strokeWidth="1.2" strokeDasharray="2 .7" /><rect x="7" y="7" width="16" height="15" fill={B} stroke="#333" /></>,
  f2: <><rect x="3" y="7" width="11" height="16" fill={B} {...D} /><rect x="16" y="7" width="11" height="16" fill={B} {...D} /></>,
  g1: <><rect x="2" y="2" width="26" height="26" fill={O} {...D} /><rect x="6" y="6" width="18" height="16" fill={B} /><text x="15" y="19" textAnchor="middle" fontFamily="Liberation Sans" fontWeight="700" fontSize="15" fill="#111">%</text></>,
  g2: <><rect x="8" y="2" width="14" height="26" fill={BR} {...D} /><circle cx="19" cy="15" r="1" fill="#333" /></>,
  h1: <><rect x="1" y="3" width="25" height="23" fill={O} {...D} /><rect x="5" y="6" width="14" height="13" fill={B} /><text x="22" y="25" textAnchor="middle" fontFamily="Liberation Serif" fontWeight="700" fontSize="19" fill="#fff" stroke="#333" strokeWidth=".8">P</text></>,
  h2: <><path d="M9 3h20l-6 15H2z" fill={B} {...D} /><path d="M2 18h21l6-15v9l-6 15H2z" fill={O} {...D} /><path d="M13 6l-3 8M20 6l-3 8" stroke="#222" /></>,
  v1: <House win />, v2: <House f={O} r={O} />,
  v3: <><House wire /><path d="M7 23l7-7M14 10l9-6" stroke={RD} strokeWidth="2" /><path d="M14 19h14" stroke={RD} strokeWidth="2" /></>,
  v4: <><House wire /><path d="M8 16h14M8 22h14M13 12v15M19 12v15" stroke="#888" strokeWidth=".7" /></>,
  v5: <Attr><Cube top="#eee" l="#eee" rt={O} /></Attr>,
  v6: <Attr><Cube top={O} l={O} rt={O} /></Attr>,
  v7: <><Cube top="#eee" l="#eee" rt={RD} /><polygon points="15,16 26,10 26,16 15,22" fill={RD} /><polygon points="15,22 26,16 26,21 15,28" fill={B} /></>,
  v8: <><polygon points={hex(15, 21, 9)} fill={B} stroke="#222" /><Cube cy={12} r={10} top={RD} l="#d21f26" rt="#a11319" /></>,
  v9: <><Cube top="#f2f2f2" l="#f2f2f2" rt="#eee" d={{ stroke: '#999', strokeWidth: 1, strokeDasharray: '1.6 1' }} /><text x="21" y="21" textAnchor="middle" fontFamily="Liberation Serif" fontWeight="700" fontSize="11" fill="#333">1</text></>,
  v10: <><polygon points={hex(15, 15, 13)} fill="#eee" stroke="#aaa" strokeDasharray="1.6 1" /><path d="M4 9l11 6 11-6M15 15v13" fill="none" stroke="#bbb" strokeDasharray="1.6 1" /><text x="15" y="20" textAnchor="middle" fontFamily="Liberation Serif" fontWeight="700" fontSize="11" fill="#333">A</text></>,
  v11: <Four c={['#1f8b52', '#e8488f', B, BR]} />,
  v12: <Four c={[O, M, G, P]} />,
  o1: <ArrowX c={[RD, YL, B, GN]} />,
  o2: <Four c={[RD, YL, BL, GN]} />,
  o3: <g stroke="#333" strokeWidth="1.2"><rect x="3" y="3" width="24" height="8" fill={RD} /><rect x="3" y="11" width="24" height="8" fill={YL} /><rect x="3" y="19" width="24" height="8" fill={BL} /></g>,
  o4: <g stroke="#333" strokeWidth=".7"><polygon points="3,3 27,3 15,15" fill={RD} /><polygon points="3,3 15,15 3,27" fill={YL} /><polygon points="27,3 15,15 27,27" fill={GN} /><polygon points="3,27 15,15 27,27" fill={BL} /><rect x="3" y="3" width="24" height="24" fill="none" strokeWidth="1.6" /></g>,
  o5: <ArrowX c={['#f09a92', '#e89a8a', B, BR]} />,
  o6: <ArrowX c={[O, M, G, P]} />,
  s1: <HbArrow />, s2: <HbArrow up />,
  s3: <Diamond c={RD} sat />, s4: <Diamond c={RD} sat up />,
  s5: <Diamond c={B} />, s6: <Diamond c={B} up />,
  s7: <Cyl />, s8: <Cyl up />,
};

const groups = [
  { name: '0 :: Create', w: 290, cols: [[38, 'a1', 'a2', 0, 0, 5], [37.5, 'b1', 'b2', 1, 7, 0], [31, 'c1', 'c2'], [36.5, 'd1', 'd2', 0, 0, 5.5], [43, 'e1', 'e2', 1], [37.5, 'f1', 'f2', 1, 4.5, 0], [33, 'g1', 'g2'], [30.5, 'h1', 'h2']] },
  { name: '1 :: Visualize', w: 238, cols: [[34, 'v1', 'v3'], [34, 'v2', 'v4', 0, 0, 6], [44, 'v5', 'v6', 1], [43, 'v7', 'v8', 1], [42, 'v9', 'v10', 1], [39, 'v11', 'v12', 1, 5, 0]] },
  { name: '2 :: Organize', w: 120, cols: [[37, 'o1', 'o2', 0, 0, 5], [43, 'o3', 'o4', 1], [38, 'o5', 'o6', 1, 6, 0]] },
  { name: '3 :: Serialize', w: 165, cols: [[39, 's1', 's2'], [41, 's3', 's4', 1], [44, 's5', 's6', 1], [39, 's7', 's8', 1]] },
];

const bar = {
  open: <><path d="M5 3h14l3 5v6H5z" fill="#eee" stroke="#555" /><path d="M3 12h8l2 2h11v13H3z" fill="#6fbf4a" stroke="#2e6b1e" /></>,
  save: <><rect x="3" y="2" width="22" height="25" rx="1" fill="#1a5fa8" stroke="#123" /><rect x="7" y="3" width="14" height="10" fill="#cfe3f6" /><rect x="8" y="17" width="13" height="10" fill="#555" /><rect x="15" y="18" width="4" height="8" fill="#ccc" /></>,
  focus: <><path d="M1 9V1h8M19 1h8v8M1 19v8h8M27 19v8h-8" fill="none" stroke="#111" strokeWidth="3" /><path d="M11 11l6 6M17 11l-6 6" stroke="#111" strokeWidth="1.8" /></>,
  eye: <><path d="M1 14C7 5 21 5 27 14 21 23 7 23 1 14z" fill="#eee" stroke="#222" /><circle cx="14" cy="14" r="6.5" fill="#2aa3d8" stroke="#124" /><circle cx="14" cy="14" r="2.6" fill="#111" /></>,
  pen: <><path d="M8 23c5-3 11-11 15-21-1 9-4 18-11 22z" fill="#d63c1e" /><path d="M17 14c2-3 5-8 6-12-1 7-2 10-5 14z" fill="#f5b32a" /><path d="M2 27c3 0 5-2 6-5l3 2c-2 3-5 4-9 3z" fill="#333" /></>,
  a: <><path d="M9 2h9l4 12H6z" fill="#ccc" stroke="#666" /><ellipse cx="14" cy="20" rx="9" ry="6" fill="#222" /></>,
  b: <g transform="rotate(40 14 14)"><rect x="5" y="3" width="18" height="22" rx="8" fill="#ddd" stroke="#444" /><path d="M5 13h18" stroke="#444" /><ellipse cx="14" cy="18" rx="5" ry="3" fill="#fff" stroke="#666" /></g>,
  c: <><path d="M7 2h15l4 18-6 7H6L2 14z" fill="#bb1218" stroke="#500" /><path d="M8 5h12l-3 8H6z" fill="#e66" /></>,
  d: <path d="M6 2c7 0 8 6 12 11s8 8 5 12-10 3-13-3S3 12 6 2z" fill="#1c9fb8" stroke="#0e4a56" />,
  e: <><path d="M14 2 26 12 14 26 2 16z" fill="#ddd" stroke="#444" /><path d="M14 2 26 12 18 20 10 8z" fill="#2fa84f" /></>,
  f: <><circle cx="14" cy="14" r="12" fill="#e8e8e8" stroke="#444" /><path d="M14 2a12 12 0 0 1 0 24z" fill="#d8701c" /><path d="M14 2a12 12 0 0 1 0 24c6-6 6-18 0-24z" fill="#8e2a0c" /></>,
  g: <><polygon points={hex(14, 14, 12)} fill="#7fb6d8" stroke="#345" /><circle cx="12" cy="12" r="5" fill="#cfe6f4" /></>,
};

const widgets = {
  a: <><rect x="1" y="1" width="24" height="24" rx="3" fill="#555" stroke="#ccc" /><path d="M13 4v10M9 10l4 5 4-5" fill="none" stroke="#111" strokeWidth="2.4" /><path d="M5 18h16v3H5z" fill="#111" /></>,
  b: <><path d="M13 2c-5 0-6 2-6 5v3h7v1H4c-3 0-3 3-3 6s2 5 4 5h3v-4c0-3 2-4 5-4h6c2 0 3-2 3-3V7c0-3-3-5-9-5z" fill="#3a72b0" /><path d="M13 26c5 0 7-2 7-5v-3h-7v-1h10c2 0 3-2 3-5s-1-4-3-4h-2v3c0 3-2 4-5 4h-6c-2 0-3 2-3 4v3c0 2 2 4 6 4z" fill="#f2a93c" /></>,
  c: <><rect x="1" y="1" width="24" height="24" rx="3" fill={YL} stroke="#ccc" /><path d="M4 21l3-5 2 3 4-9 2 7 3-10 2 9" fill="none" stroke="#a0501c" strokeWidth="2" /></>,
  d: <><rect x="1" y="1" width="24" height="24" rx="3" fill="#444" stroke="#ccc" /><rect x="7" y="3" width="12" height="20" fill="#eee" stroke="#111" /><rect x="8" y="13" width="10" height="9" fill="#111" /></>,
  e: <><rect x="10" y="1" width="7" height="25" fill="#6bcf4a" /><path d="M8 9h10V5l6 7-6 7v-4H8z" fill="#e01b1b" /><text x="0" y="18" fontFamily="Liberation Sans" fontWeight="700" fontSize="11" fill="#222">N</text></>,
};

const wall = '#ecb53f', roof = '#7f1212', glass = '#3db6f6', line = '#2a1c0c';
const walls = [
  '100,613 22,752 92,1146 329,1350 300,1147 272,947',
  '272,947 1028,308 1036,545 815,742 820,890 329,1350 300,1147',
  '815,742 1338,1090 1338,1270 825,915',
  '1338,1090 1548,852 1540,1030 1338,1270',
];
const roofs = ['100,613 890,27 1028,308 272,947', '1036,545 1548,852 1338,1090 815,742'];
const roofLines = ['280,483 440,803', '396,396 552,710', '534,295 584,392', '618,410 700,585', '640,218 684,308', '775,117 915,405'];
const wallLines = ['57,952 300,1147', '300,1147 1034,492', '272,947 329,1350', '440,803 465,1000', '552,710 571,905', '700,585 715,775', '800,500 808,685', '915,405 925,590', '838,665 840,718', '925,590 928,640', '902,617 905,660'];
const glasses = [
  '74,847 113,885 130,980 92,945', '192,940 233,972 249,1077 208,1040', '109,1052 147,1085 164,1180 125,1145', '226,1149 265,1183 281,1280 240,1245',
  '341,953 388,915 403,1022 355,1060', '481,840 526,797 538,900 492,938', '611,730 655,688 663,790 621,825', '735,620 776,583 782,682 742,717', '843,530 880,492 885,587 849,622', '957,425 994,396 996,495 961,522',
  '354,1182 400,1136 413,1235 367,1277', '491,1060 535,1014 546,1110 503,1150', '620,940 662,898 668,995 628,1032', '741,835 781,790 785,885 748,918',
  '812,700 835,672 840,715 815,742', '864,655 898,617 902,660 868,695', '962,570 997,530 998,565 962,605',
  '855,818 893,845 901,938 860,905', '980,903 1021,932 1025,1025 983,990', '1108,990 1152,1020 1155,1115 1112,1080', '1245,1080 1290,1110 1292,1208 1247,1172',
  '1375,1095 1410,1058 1408,1158 1375,1195', '1476,990 1510,942 1508,1035 1475,1075',
];

const Building = () => (
  <BuildingSvg viewBox="0 0 1568 1380" preserveAspectRatio="none">
    <g stroke={line} strokeWidth="1">
      {walls.map(p => <polygon key={p} points={p} fill={wall} vectorEffect="non-scaling-stroke" />)}
      {wallLines.map(p => <polyline key={p} points={p} fill="none" vectorEffect="non-scaling-stroke" />)}
      {glasses.map(p => <polygon key={p} points={p} fill={glass} vectorEffect="non-scaling-stroke" />)}
      {roofs.map(p => <polygon key={p} points={p} fill={roof} vectorEffect="non-scaling-stroke" />)}
      {roofLines.map(p => <polyline key={p} points={p} fill="none" stroke="#2f0505" vectorEffect="non-scaling-stroke" />)}
      <polygon points="584,392 702,303 722,333 598,424" fill={roof} stroke="#2f0505" vectorEffect="non-scaling-stroke" />
      <polygon points="682,398 733,362 768,440 722,478" fill={glass} vectorEffect="non-scaling-stroke" />
    </g>
  </BuildingSvg>
);

const menuL = ['File', 'Edit', 'View', 'Curve', 'Surface', 'SubD', 'Solid', 'Mesh', 'Dimension', 'Transform', 'Tools', 'Analyze', 'Render', 'Panels', 'Help'];
const tabsL = ['Environmental Analysis', 'Standard', 'CPlanes', 'Set View', 'Display', 'Select', 'Viewport Layout', 'Visibility', 'Transform'];
const snaps = [['End', 1], ['Near', 1], ['Point', 1], ['Mid', 1], ['Cen', 0], ['Int', 1], ['Perp', 0], ['Tan', 0], ['Quad', 0], ['Knot', 0], ['Vertex', 0]];
const inputs = ['_hb_objs', '_win_height_', '_win_width_', '_sill_height_', '_horiz_separ_', 'operable_'];
const outsA = ['', 'report', '', '', 'hb_objs', ''];
const outsB = ['walls', 'interior_walls', 'roofs', 'ceilings', 'exterior_floors', 'interior_floors', 'air_walls', 'apertures', 'interior_apertures', 'doors', 'interior_doors', 'outdoor_shades', 'indoor_shades', 'wire_frame'];
const ORG = { x: 852, y: 220 };
const sliders = [
  { x: 906, y: 441, w: 246, l: 85, label: '_win_height_', knob: 5, val: '1.5', vx: 19 },
  { x: 898, y: 475, w: 255, l: 80, label: '_win_width_', knob: 6, val: '1.0', vx: 18 },
  { x: 904, y: 515, w: 250, l: 79, label: '_sill_height_', knob: 71, val: '0.5', vx: 83 },
  { x: 904, y: 555, w: 251, l: 86, label: '_horiz_separ_', knob: 77, val: '3.0', vx: 56 },
];
const wires = [
  'M171 143C260 143 260 212 379 212',
  'M300 233C340 233 340 235 379 235',
  'M301 266C340 266 340 257 379 257',
  'M302 305C345 305 340 280 379 280',
  'M303 346C345 346 340 303 379 303',
  'M570 303H617',
];

export default function App() {
  return (
    <>
      <Global />
      <svg width="0" height="0" style={{ position: 'absolute' }}>
        <defs><radialGradient id="sph" cx=".45" cy=".3" r=".75"><stop offset="0" stopColor="#f4f4f4" /><stop offset=".55" stopColor="#888" /><stop offset="1" stopColor="#111" /></radialGradient></defs>
      </svg>
      <Page>
        <RhinoWindow>
          <RhinoTitle>
            <Ic s={20} v={20}><rect width="20" height="20" fill="#222" /><path d="M1 14 6 4l6 2 5-3-2 6 3 4-6 1-3 6-3-5z" fill="#fff" /><path d="M6 9l5 1-2 4z" fill="#222" /></Ic>
            <span>RevitSampleModel_DONE.3dm (2 MB) - Rhino 7 Not For Resale - [Perspective]</span>
          </RhinoTitle>
          <RhinoMenu>{menuL.map(m => <span key={m}>{m}</span>)}</RhinoMenu>
          <History>
            <HistoryLine>2 curves, 27 Doors, 66 Apertures, 15 Rooms added to selection.</HistoryLine>
            <HistoryLine>Command: Hide</HistoryLine>
            <HistoryLine>30 surfaces added to selection.</HistoryLine>
            <HistoryLine>Command: _Delete</HistoryLine>
          </History>
          <CommandRow>Command:</CommandRow>
          <TabRow>{tabsL.map(t => <RhinoTab key={t} $on={t === 'Standard'}><span>{t}</span></RhinoTab>)}</TabRow>
          <Toolbar>{rhinoTools.map(([c, m], i) => <ToolSlot key={i} $more={!!m}><Ic>{c}</Ic></ToolSlot>)}</Toolbar>
          <Work>
            <Sidebar>{sideTools.map(([c, m], i) => <SideSlot key={i} $more={!!m}><Ic s={25}>{c}</Ic></SideSlot>)}</Sidebar>
            <Viewport>
              <ViewName>Perspective<ViewArrow /></ViewName>
              <Building />
              <AxisSvg viewBox="0 0 80 50">
                <path d="M35 44V18M35 44 57 28M35 44 9 32" stroke="#999" fill="none" />
                <text x="39" y="14" fontSize="15" fill="#444" fontFamily="Open Sans">z</text>
                <text x="59" y="24" fontSize="15" fill="#444" fontFamily="Open Sans">x</text>
                <text x="12" y="25" fontSize="15" fill="#444" fontFamily="Open Sans">y</text>
              </AxisSvg>
            </Viewport>
          </Work>
          <ViewTabs>
            <ViewTab $on><span>Perspective</span></ViewTab>
            <ViewTab><span>Top</span></ViewTab>
            <ViewTab><span>Front</span></ViewTab>
            <ViewTab><span>Right</span></ViewTab>
            <PlusTab>✚</PlusTab>
          </ViewTabs>
          <OsnapRow>
            {snaps.map(([t, on]) => <Snap key={t}><Check>{on ? <Svg width="11" height="11" viewBox="0 0 11 11"><path d="M2 5l3 4 4-7" fill="none" stroke="#333" strokeWidth="1.2" /></Svg> : null}</Check>{t}</Snap>)}
            <Snap $mr={8}><Check $off />&nbsp;Project</Snap>
            <Snap><Check $off />&nbsp;Disable</Snap>
          </OsnapRow>
          <StatusRow>
            <Cell $w={52} $left>CPlane</Cell>
            <Cell $w={94}>x -0.432</Cell>
            <Cell $w={94}>y -25.130</Cell>
            <Cell $w={95}>z</Cell>
            <Cell $w={95}>Meters</Cell>
            <Cell $w={183} $left><LayerSwatch />Layer 01</Cell>
            <Cell $w={70}>Grid Snap</Cell>
            <Cell $w={47}>Ortho</Cell>
            <Cell $w={47}>Planar</Cell>
            <Cell $w={48} $on>Osnap</Cell>
            <Cell $w={20} $left>Sm</Cell>
          </StatusRow>
        </RhinoWindow>

        <GhWindow>
          <GhTitle>
            <span>Grasshopper - unnamed</span>
            <WinButtons>
              <WinButton $w={48}><Svg width="13" height="13" viewBox="0 0 13 13"><path d="M0 7h13" stroke="#777" /></Svg></WinButton>
              <WinButton $w={48}><Svg width="13" height="13" viewBox="0 0 13 13"><rect x=".5" y=".5" width="12" height="12" fill="none" stroke="#777" /></Svg></WinButton>
              <WinButton $w={58}><Svg width="13" height="13" viewBox="0 0 13 13"><path d="M1 1l11 11M12 1 1 12" stroke="#777" /></Svg></WinButton>
            </WinButtons>
          </GhTitle>
          <GhMenu>
            <GhMenuItems>{['File', 'Edit', 'View', 'Display', 'Solution', 'Help'].map(m => <span key={m}>{m}</span>)}</GhMenuItems>
            <span>unnamed</span>
          </GhMenu>
          <GhTabs>
            {ghTabs.map((t, i) => <GhTab key={i} $on={t === 'bee'}>{gh[t] ? <Ic s={22}>{gh[t]}</Ic> : t}</GhTab>)}
          </GhTabs>
          <Ribbon>
            {groups.map(g => (
              <Group key={g.name} $w={g.w}>
                <GroupIcons>
                  {g.cols.map(([w, a, b, sep, pl, pr]) => (
                    <GroupCol key={a} $w={w} $sep={!!sep} $pl={pl} $pr={pr}>
                      <Ic s={27} v={30}>{rib[a]}</Ic>
                      <Ic s={27} v={30}>{rib[b]}</Ic>
                    </GroupCol>
                  ))}
                </GroupIcons>
                <GroupFoot>{g.name}<GroupPlus>+</GroupPlus></GroupFoot>
              </Group>
            ))}
          </Ribbon>
          <GhBar>
            <BarIcon><Ic s={26} v={28}>{bar.open}</Ic></BarIcon>
            <BarIcon><Ic s={26} v={28}>{bar.save}</Ic></BarIcon>
            <ZoomBox>200%<Svg width="8" height="5" viewBox="0 0 8 5"><path d="M0 0l4 4 4-4" fill="none" stroke="#777" /></Svg></ZoomBox>
            <BarIcon $w={28}><Ic s={26} v={28}>{bar.focus}</Ic></BarIcon>
            <Caret $m={5} />
            <BarIcon><Ic s={26} v={28}>{bar.eye}</Ic></BarIcon>
            <Caret $m={4} />
            <BarIcon $w={34}><Ic s={26} v={28}>{bar.pen}</Ic></BarIcon>
            <BarSpacer />
            <BarIcon $w={30}><Ic s={26} v={28}>{bar.a}</Ic></BarIcon>
            <BarIcon $w={30}><Ic s={26} v={28}>{bar.b}</Ic></BarIcon>
            <BarIcon $w={30} $sel><Ic s={26} v={28}>{bar.c}</Ic></BarIcon>
            <BarIcon $w={10} />
            <BarIcon $w={28}><Ic s={26} v={28}>{bar.d}</Ic></BarIcon>
            <BarIcon $w={30}><Ic s={26} v={28}>{bar.e}</Ic></BarIcon>
            <BarIcon $w={30}><Ic s={26} v={28}>{bar.f}</Ic></BarIcon>
            <BarIcon $w={1} />
            <BarIcon $w={30}><Ic s={26} v={28}>{bar.g}</Ic></BarIcon>
            <Caret />
            <BarIcon $w={9} />
          </GhBar>
          <CanvasWrap>
            <Canvas>
              <WireSvg viewBox="0 0 837 836">
                {wires.map(d => <path key={d} d={d} fill="none" stroke="#4a4a46" strokeWidth="3" />)}
              </WireSvg>
              <ParamNode $x={966 - ORG.x} $y={349 - ORG.y}>
                <Port $side="left" /><Port $side="right" />
                <Ic s={24} v={26}><polygon points={hex(13, 13, 12)} fill="#222" /><polygon points={hex(13, 13, 8)} fill="#eee" stroke="#555" /><path d="M7 10l6-3 6 3v6l-6 3-6-3zM7 10l6 3 6-3M13 13v6" fill="none" stroke="#555" /></Ic>
              </ParamNode>
              {sliders.map(s => (
                <SliderNode key={s.label} $x={s.x - ORG.x} $y={s.y - ORG.y} $w={s.w}>
                  <SliderLabel $w={s.l}>{s.label}</SliderLabel>
                  <SliderTrack>
                    <Ticks />
                    <Knob $x={s.knob} />
                    <SliderValue $x={s.vx}>{s.val}</SliderValue>
                  </SliderTrack>
                  <Port $side="right" />
                </SliderNode>
              ))}
              <CompNode $x={1231 - ORG.x} $y={419 - ORG.y} $w={191}>
                <CompBody $h={139} $pt={1}>
                  <Collapse><Svg width="11" height="11" viewBox="0 0 11 11"><path d="M5.5 0v9M1.5 5l4 4.5 4-4.5" fill="none" stroke="#555" strokeWidth="1.6" /></Svg></Collapse>
                  <PortRows $w={97}>{inputs.map(t => <PortRow key={t} $right>{t}</PortRow>)}</PortRows>
                  <CompIcon $w={38}>
                    <Ic s={24} v={30}><rect x="1" y="1" width="28" height="28" fill={O} stroke="#777" /><rect x="7" y="5" width="21" height="18" fill={B} /><text x="11" y="17" fontFamily="Liberation Serif" fontSize="13" fill="#111">y</text><text x="18" y="20" fontFamily="Liberation Serif" fontSize="11" fill="#111">x</text></Ic>
                  </CompIcon>
                  <PortRows $w={54}>{outsA.map((t, i) => <PortRow key={i}>{t || '\u00a0'}</PortRow>)}</PortRows>
                  <InPorts $t={1}>{inputs.map(t => <PortAnchor key={t}><Port $side="left" /></PortAnchor>)}</InPorts>
                  <OutPorts $t={1}>{outsA.map((t, i) => <PortAnchor key={i}>{t && <Port $side="right" />}</PortAnchor>)}</OutPorts>
                </CompBody>
                <CompFoot>1.7.0</CompFoot>
              </CompNode>
              <CompNode $x={1469 - ORG.x} $y={362 - ORG.y} $w={200}>
                <CompBody $h={320} $pt={2}>
                  <SideLabel>
                    <span>_hb_objs</span>
                    <Ic s={24} v={30}><Four c={[O, M, G, P]} /></Ic>
                  </SideLabel>
                  <PortRows $w={106}>{outsB.map(t => <PortRow key={t}>{t}</PortRow>)}</PortRows>
                  <InPorts $t={149}><PortAnchor><Port $side="left" /></PortAnchor></InPorts>
                  <OutPorts $t={2}>{outsB.map(t => <PortAnchor key={t}><Port $side="right" /></PortAnchor>)}</OutPorts>
                </CompBody>
                <CompFoot>1.7.1</CompFoot>
              </CompNode>
              <CursorSvg viewBox="0 0 16 20"><path d="M1 1v15l4-3 3 6 3-1-3-6h5z" fill="#fff" stroke="#333" /></CursorSvg>
              <Widgets>
                {Object.entries(widgets).map(([k, c]) => <WidgetSlot key={k}><Ic>{c}</Ic></WidgetSlot>)}
              </Widgets>
              <Compass viewBox="0 0 48 62">
                <path d="M4 14l8-6 10 6-8 10z" fill="#111" />
                <circle cx="26" cy="38" r="22" fill="#222" />
                <circle cx="26" cy="38" r="20.5" fill="#fff" />
                <circle cx="26" cy="38" r="18.5" fill="#c8c8c8" />
                <circle cx="26" cy="38" r="11" fill="#dcdcdc" />
                <path d="M14 26h6l-6 6zM38 26h-6l6 6zM14 50h6l-6-6zM38 50h-6l6-6z" fill="#fff" />
              </Compass>
            </Canvas>
          </CanvasWrap>
          <GhStatus><span>...</span><span>1.0.0007</span></GhStatus>
        </GhWindow>
      </Page>
    </>
  );
}
